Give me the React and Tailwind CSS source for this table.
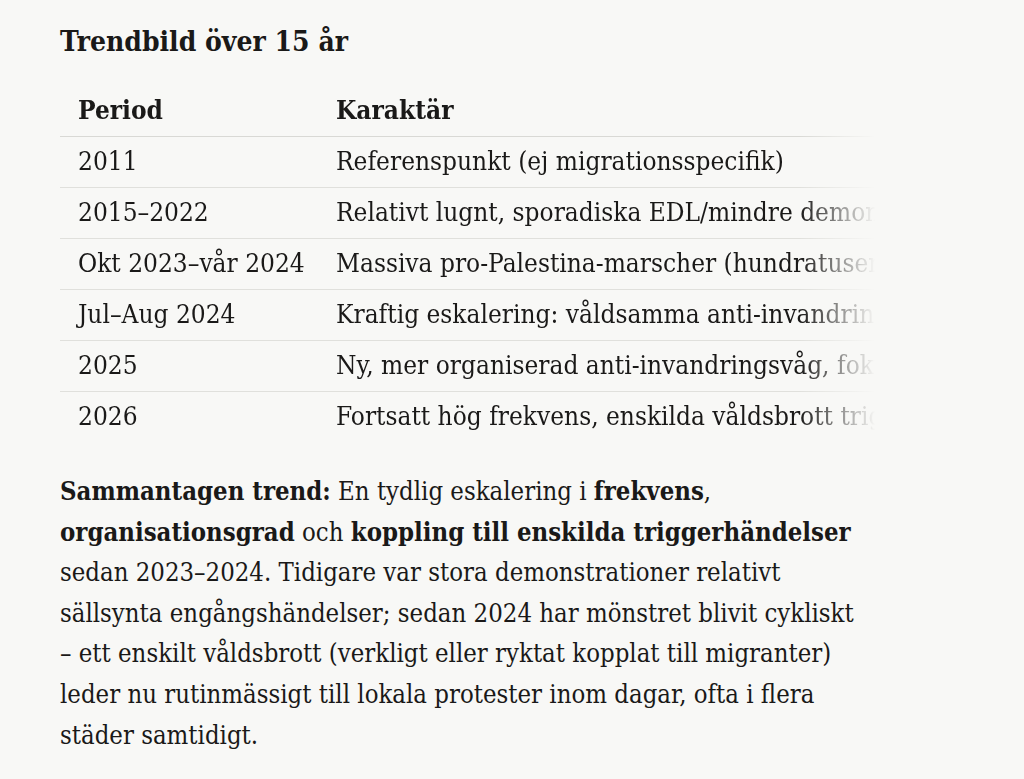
import React from "react";

const rows = [
  { period: "2011", text: "Referenspunkt (ej migrationsspecifik)" },
  { period: "2015–2022", text: "Relativt lugnt, sporadiska EDL/mindre demonstrationer" },
  { period: "Okt 2023–vår 2024", text: "Massiva pro-Palestina-marscher (hundratusentals deltagare)" },
  { period: "Jul–Aug 2024", text: "Kraftig eskalering: våldsamma anti-invandringsupplopp efter Southport" },
  { period: "2025", text: "Ny, mer organiserad anti-invandringsvåg, fokus på asylhotell" },
  { period: "2026", text: "Fortsatt hög frekvens, enskilda våldsbrott triggar lokala protester" },
];

const TrendTable = () => (
  <div className="mt-[26px] w-[815px] overflow-x-hidden [mask-image:linear-gradient(to_right,#000_calc(100%_-_75px),transparent)]">
    <table className="w-max border-collapse text-left text-[26px]">
      <thead>
        <tr className="border-b border-[#d9d9d5]">
          <th className="h-[50px] w-[258px] pl-[18px] pr-[10px] font-bold">Period</th>
          <th className="h-[50px] px-[18px] font-bold">Karaktär</th>
        </tr>
      </thead>
      <tbody>
        {rows.map((row, i) => (
          <tr
            key={row.period}
            className={i < rows.length - 1 ? "border-b border-[#e0e0dc]" : ""}
          >
            <td className="h-[51px] w-[258px] whitespace-nowrap pl-[18px] pr-[10px]">
              {row.period}
            </td>
            <td className="h-[51px] whitespace-nowrap px-[18px]">{row.text}</td>
          </tr>
        ))}
      </tbody>
    </table>
  </div>
);

export default function App() {
  return (
    <div className="min-h-screen bg-[#f8f8f6] font-['DejaVu_Serif_Condensed','DejaVu_Serif',serif] text-[25.5px] text-[#1a1918]">
      <div className="pl-[60px] pt-[24px]">
        <h2 className="text-[28px] font-bold leading-[36px]">Trendbild över 15 år</h2>
        <TrendTable />
        <p className="mt-[29px] whitespace-nowrap leading-[40.6px]">
          <strong>Sammantagen trend:</strong> En tydlig eskalering i{" "}
          <strong>frekvens</strong>,
          <br />
          <strong>organisationsgrad</strong> och{" "}
          <strong>koppling till enskilda triggerhändelser</strong>
          <br />
          sedan 2023–2024. Tidigare var stora demonstrationer relativt
          <br />
          sällsynta engångshändelser; sedan 2024 har mönstret blivit cykliskt
          <br />
          – ett enskilt våldsbrott (verkligt eller ryktat kopplat till migranter)
          <br />
          leder nu rutinmässigt till lokala protester inom dagar, ofta i flera
          <br />
          städer samtidigt.
        </p>
      </div>
    </div>
  );
}
